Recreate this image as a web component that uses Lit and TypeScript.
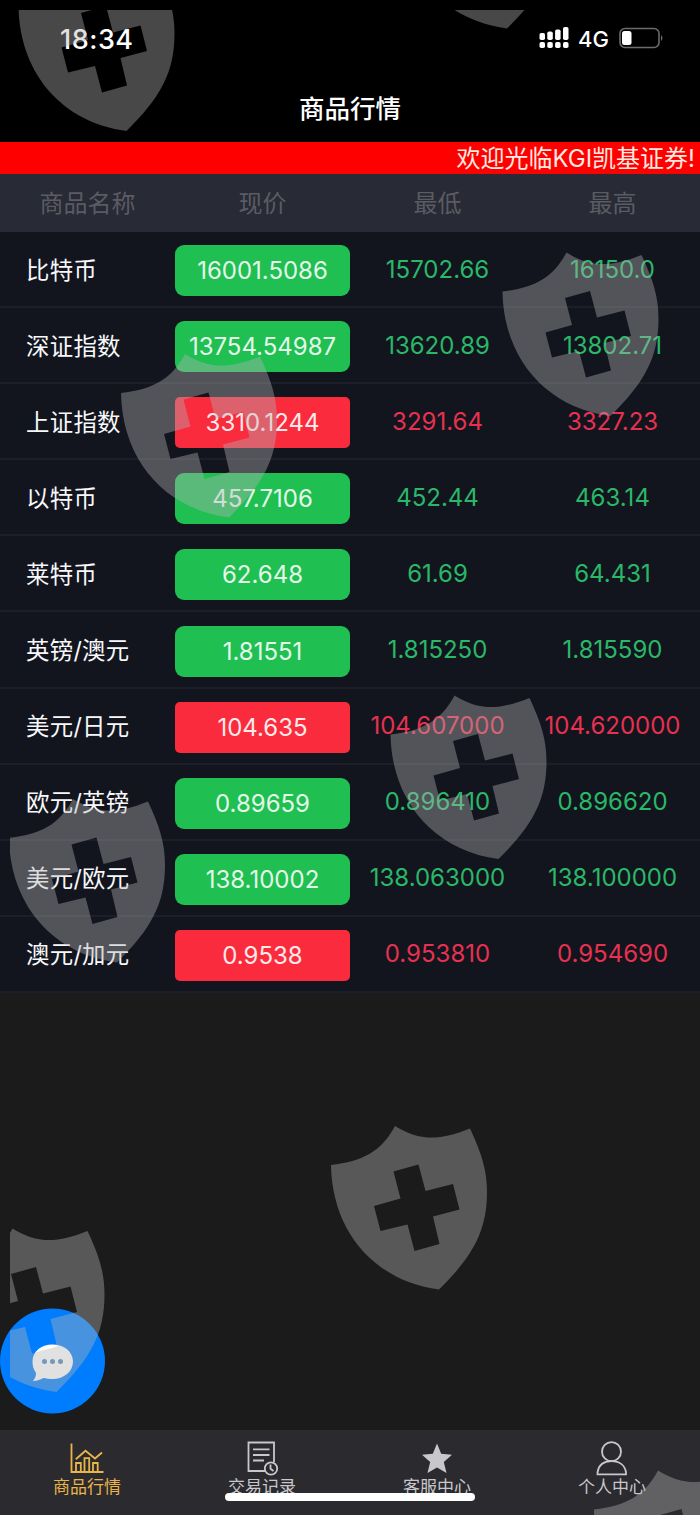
import { LitElement, html, css, svg } from 'lit';
import { customElement, property } from 'lit/decorators.js';
import { classMap } from 'lit/directives/class-map.js';

interface Quote {
    name: string;
    price: string;
    low: string;
    high: string;
    down?: boolean;
}

const QUOTES: Quote[] = [
    { name: '比特币', price: '16001.5086', low: '15702.66', high: '16150.0' },
    { name: '深证指数', price: '13754.54987', low: '13620.89', high: '13802.71' },
    { name: '上证指数', price: '3310.1244', low: '3291.64', high: '3327.23', down: true },
    { name: '以特币', price: '457.7106', low: '452.44', high: '463.14' },
    { name: '莱特币', price: '62.648', low: '61.69', high: '64.431' },
    { name: '英镑/澳元', price: '1.81551', low: '1.815250', high: '1.815590' },
    { name: '美元/日元', price: '104.635', low: '104.607000', high: '104.620000', down: true },
    { name: '欧元/英镑', price: '0.89659', low: '0.896410', high: '0.896620' },
    { name: '美元/欧元', price: '138.10002', low: '138.063000', high: '138.100000' },
    { name: '澳元/加元', price: '0.9538', low: '0.953810', high: '0.954690', down: true },
];

const ICONS = {
    chart: svg`
        <path d="M2.500 2.500V31H34.500"/>
        <path d="M6.800 18.300L16.500 9.800L26 17.500L33 11.500"/>
        <path d="M7 31V22H11.800V31M15.500 31V17.200H20.200V31M24 31V22H28.700V31"/>`,
    record: svg`
        <path d="M21 30H4.500V1.500H30V21"/>
        <path d="M9 8.300H25.500M9 14H25.500M9 19.500H20"/>
        <circle cx="27" cy="27.500" r="6.200"/>
        <path d="M26.500 23.500V27.800L29.500 30"/>`,
    star: svg`
        <path class="solid" d="M18 2.500L22.200 12.800L33 13.800L24.800 21L27.500 32L18 26.500L8.500 32L11.200 21L3 13.800L13.800 12.800Z"/>`,
    person: svg`
        <circle cx="17.500" cy="10.700" r="9.500"/>
        <path d="M3.500 33.300V31.500C4.500 24.500 9.500 20.200 17.500 20.200S31 24.500 32 31.500V33.300Z"/>`,
};

@customElement('status-bar')
export class StatusBar extends LitElement {
    static styles = css`
        :host {
            display: flex;
            align-items: center;
            height: 76px;
            padding: 0 37px 0 60px;
            box-sizing: border-box;
            font-family: Inter, sans-serif;
            color: #fff;
        }

        .time {
            flex: 1;
            padding-top: 2px;
            font-size: 27px;
            font-weight: 550;
            letter-spacing: 0.5px;
        }

        .network {
            margin: 2px 10px 0 9px;
            font-size: 22px;
            font-weight: 450;
        }

        .signal {
            width: 31px;
            height: 22px;
            fill: #fff;
        }

        .battery {
            width: 44px;
            height: 22px;
        }
    `;

    render() {
        return html`
            <span class="time">18:34</span>
            <svg class="signal" viewBox="0 0 31 22">
                <rect x="1.500" y="6" width="5.500" height="7" rx="1.800"/>
                <rect x="9.300" y="4.500" width="5.500" height="8.500" rx="1.800"/>
                <rect x="17.100" y="2.500" width="5.500" height="10.500" rx="1.800"/>
                <rect x="25" y="0" width="5.500" height="13" rx="1.800"/>
                ${[1.5, 9.3, 17.1, 25].map((x) => svg`<rect x=${x} y="15" width="5.500" height="6" rx="1.800"/>`)}
            </svg>
            <span class="network">4G</span>
            <svg class="battery" viewBox="0 0 44 22">
                <rect x="1" y="1.500" width="39" height="19" rx="5" fill="none" stroke="#6b6b6b" stroke-width="1.600"/>
                <rect x="3" y="4" width="9.500" height="14" rx="2.500" fill="#fff"/>
                <path d="M42 8Q45 11 42 14Z" fill="#6b6b6b"/>
            </svg>
        `;
    }
}

@customElement('quote-row')
export class QuoteRow extends LitElement {
    @property({ attribute: false }) quote!: Quote;

    static styles = css`
        .row {
            display: grid;
            grid-template-columns: repeat(4, 175px);
            align-items: center;
            height: 76.1px;
            box-sizing: border-box;
            border-bottom: 2px solid #1c1f28;
            background: #12151e;
            color: #2ab868;
            font-size: 24px;
            font-weight: 370;
            text-align: center;
        }

        .name {
            padding: 0 0 1px 26px;
            font-size: 23.4px;
            letter-spacing: 0.3px;
            text-align: left;
            color: #f8f8fb;
        }

        .price {
            height: 51px;
            margin-top: 3px;
            border-radius: 9px;
            line-height: 52px;
            background: #1fbf52;
            color: #e4f8e9;
        }

        .down {
            color: #e63150;
        }

        .down .price {
            border-radius: 5px;
            background: #f92b3d;
            color: #ffe9ea;
        }
    `;

    render() {
        const q = this.quote;
        return html`
            <div class=${classMap({ row: true, down: !!q.down })}>
                <span class="name">${q.name}</span>
                <span class="price">${q.price}</span>
                <span>${q.low}</span>
                <span>${q.high}</span>
            </div>
        `;
    }
}

@customElement('tab-bar')
export class TabBar extends LitElement {
    static styles = css`
        :host {
            display: grid;
            grid-template-columns: repeat(4, 1fr);
            height: 85px;
            background: #2b2a2f;
            color: #c8c7cb;
            font-size: 17px;
        }

        .tab {
            display: flex;
            flex-direction: column;
            align-items: center;
            padding: 11px 1px 0 0;
            line-height: 22px;
        }

        .active {
            color: #e9b548;
        }

        .icon {
            width: 36px;
            height: 35px;
            fill: none;
            stroke: currentColor;
            stroke-width: 1.8;
            overflow: visible;
        }

        .solid {
            fill: currentColor;
            stroke: none;
        }
    `;

    render() {
        const tabs = [
            { label: '商品行情', icon: ICONS.chart, active: true },
            { label: '交易记录', icon: ICONS.record },
            { label: '客服中心', icon: ICONS.star },
            { label: '个人中心', icon: ICONS.person },
        ];

        return html`
            ${tabs.map((tab) => html`
                <div class=${classMap({ tab: true, active: !!tab.active })}>
                    <svg class="icon" viewBox="0 0 36 35">${tab.icon}</svg>
                    <span>${tab.label}</span>
                </div>
            `)}
        `;
    }
}

@customElement('shield-overlay')
export class ShieldOverlay extends LitElement {
    static styles = css`
        .overlay {
            display: block;
            width: 700px;
            height: 1515px;
            fill: #b4b4b4;
            fill-opacity: 0.4;
            fill-rule: evenodd;
        }
    `;

    render() {
        // top-left origin of each shield
        const spots = [
            [7.5, -48.5], [388, -151], [491.5, 236.5], [110, 338],
            [379.5, 679.5], [-2, 783], [320, 1110], [-62.5, 1212.5], [583, 1454.5],
        ];
        return html`
            <svg class="overlay" viewBox="0 0 700 1515">
                <clipPath id="edge"><rect x="10" y="10" width="690" height="1505"/></clipPath>
                <g clip-path="url(#edge)">
                    ${spots.map(([x, y]) => svg`
                        <path transform="translate(${x} ${y})" d="M11 55
                            C43 51 61 42 75 16
                            C99 31 119 31 150 18.500
                            C162 44 167 61 167 82
                            C167 121 153 146 119 179.500
                            C54 171 12 121 11 55Z
                            M73.500 61.500L98.500 54.500L105.500 81L133 74L139.500 99.500L113 106.500L119.500 134L94.500 141L87.500 114.500L60.500 121L54 96L80.500 88.500Z"/>
                    `)}
                </g>
            </svg>
        `;
    }
}

@customElement('app-root')
export class AppRoot extends LitElement {
    static styles = css`
        :host {
            position: relative;
            display: flex;
            flex-direction: column;
            width: 700px;
            height: 1515px;
            overflow: hidden;
            background: #1b1b1b;
            font-family: Inter, 'Noto Sans CJK SC', sans-serif;
        }

        .top {
            height: 142px;
            background: #000;
        }

        .title {
            height: 64px;
            font-size: 25.5px;
            font-weight: 500;
            line-height: 65px;
            text-align: center;
            color: #fff;
        }

        .notice {
            height: 32px;
            padding-right: 5px;
            background: #fe0000;
            font-size: 24px;
            font-weight: 370;
            line-height: 33px;
            text-align: right;
            white-space: nowrap;
            color: #ffe9e0;
        }

        .head {
            display: grid;
            grid-template-columns: repeat(4, 175px);
            height: 58px;
            background: #282a35;
            font-size: 24px;
            line-height: 60px;
            text-align: center;
            color: #5b5b64;
        }

        .list {
            flex: 1;
        }

        .chat {
            position: absolute;
            left: 0;
            top: 1308px;
            width: 105px;
            height: 106px;
        }

        .home-indicator {
            position: absolute;
            left: 225px;
            top: 1493px;
            width: 250px;
            height: 8px;
            border-radius: 4px;
            background: #fff;
        }

        .shields {
            position: absolute;
            left: 0;
            top: 0;
            pointer-events: none;
        }
    `;

    render() {
        return html`
            <div class="top">
                <status-bar></status-bar>
                <div class="title">商品行情</div>
            </div>
            <div class="notice">欢迎光临KGI凯基证券!</div>
            <div class="head">
                <span>商品名称</span>
                <span>现价</span>
                <span>最低</span>
                <span>最高</span>
            </div>
            <div class="list">
                ${QUOTES.map((q) => html`<quote-row .quote=${q}></quote-row>`)}
            </div>
            <tab-bar></tab-bar>
            <svg class="chat" viewBox="0 0 105 106">
                <circle cx="52.500" cy="53" r="52.500" fill="#007dfe"/>
                <path fill="#fff" d="M52.500 36.500C64 36.500 73 43.500 73 53.500S64 71 52.500 71C49 71 46 70.500 43.500 70C41 71.500 37 73 33 73C35 70.500 36 68 36 65C33.500 61.500 32.500 58 32.500 53.500C32.500 43.500 41 36.500 52.500 36.500Z"/>
                <g fill="#4a87bd">
                    <circle cx="44.500" cy="53.500" r="2.500"/>
                    <circle cx="52.500" cy="53.500" r="2.500"/>
                    <circle cx="60.500" cy="53.500" r="2.500"/>
                </g>
            </svg>
            <shield-overlay class="shields"></shield-overlay>
            <div class="home-indicator"></div>
        `;
    }
}
